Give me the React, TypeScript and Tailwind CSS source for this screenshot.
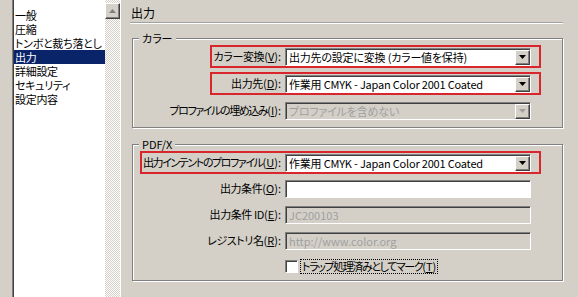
import React from "react";

const sunken =
  "border border-t-[#808080] border-l-[#808080] border-r-white border-b-white shadow-[inset_1px_1px_0_#404040]";

function Accel({ text, k, tight }: { text: string; k: string; tight?: boolean }) {
  return (
    <span className="whitespace-nowrap">
      <span className={tight ? "tracking-[-1.4px]" : "tracking-[-0.4px]"}>{text}</span>(<u>{k}</u>):
    </span>
  );
}

function Arrow({ disabled }: { disabled?: boolean }) {
  return (
    <span className="w-[15px] h-full bg-[#d4d0c8] border border-t-white border-l-white border-r-[#404040] border-b-[#404040] shadow-[inset_-1px_-1px_0_#808080] flex items-center justify-center">
      <svg width="7" height="4" viewBox="0 0 7 4">
        <path d="M0 0h7L3.5 4z" fill={disabled ? "#a0a0a0" : "#000"} />
      </svg>
    </span>
  );
}

function Select({ value, disabled }: { value: string; disabled?: boolean }) {
  return (
    <div
      className={`w-[246px] h-[18px] shrink-0 flex items-stretch pt-[1px] pl-[1px] ${sunken} ${
        disabled ? "bg-[#d4d0c8] text-[#a0a0a0]" : "bg-white text-black"
      }`}
    >
      <span className="flex-1 pl-[2px] leading-[15px] truncate tracking-[-0.2px]">{value}</span>
      <Arrow disabled={disabled} />
    </div>
  );
}

function Input({ value, disabled }: { value?: string; disabled?: boolean }) {
  return (
    <div
      className={`w-[246px] h-[18px] shrink-0 pl-[3px] leading-[16px] ${sunken} ${
        disabled ? "bg-[#d4d0c8] text-[#a0a0a0]" : "bg-white text-black"
      }`}
    >
      {value}
    </div>
  );
}

function Row({
  label,
  k,
  width,
  tight,
  children,
}: {
  label?: string;
  k?: string;
  width?: string;
  tight?: boolean;
  children: React.ReactNode;
}) {
  return (
    <div className="flex justify-end">
      <div
        className={`h-[23px] flex items-center justify-end gap-[4px] pr-[8px] border-2 ${
          width ? `${width} border-[#d8262c]` : "border-transparent"
        }`}
      >
        {label && <Accel text={label} k={k ?? ""} tight={tight} />}
        {children}
      </div>
    </div>
  );
}

function Group({
  title,
  gap,
  pb,
  children,
}: {
  title: string;
  gap: string;
  pb: string;
  children: React.ReactNode;
}) {
  return (
    <fieldset
      className={`ml-[2px] pr-[21px] ${pb} border border-[#808080] shadow-[inset_1px_1px_0_#fff,1px_1px_0_#fff] flex flex-col ${gap}`}
    >
      <legend className="ml-[6px] px-[3px] leading-[14px] bg-[#d4d0c8]">{title}</legend>
      {children}
    </fieldset>
  );
}

const items = ["一般", "圧縮", "トンボと裁ち落とし", "出力", "詳細設定", "セキュリティ", "設定内容"];

export default function App() {
  return (
    <div className="w-[578px] h-[297px] overflow-hidden bg-[#d4d0c8] flex pr-[15px] text-[11px] text-black font-['Noto_Sans_CJK_JP','Noto_Sans',sans-serif] [font-feature-settings:'palt']">
      <div className="ml-[12px] w-[109px] h-[310px] flex border-l border-l-[#808080] border-r border-r-white shadow-[inset_1px_0_0_#404040]">
        <ul className="flex-1 ml-[1px] bg-white pt-[8px] text-[11px] tracking-[-0.3px]">
          {items.map((it) => (
            <li
              key={it}
              className={`h-[14px] leading-[14px] pl-[1px] whitespace-nowrap ${
                it === "出力" ? "bg-[#0a246a] text-white" : ""
              }`}
            >
              {it}
            </li>
          ))}
        </ul>
        <div className="w-[15px] bg-[repeating-conic-gradient(#d4d0c8_0_25%,#fff_0_50%)] bg-[length:2px_2px] pt-[3px]">
          <div className="h-[16px] bg-[#d4d0c8] border border-t-white border-l-white border-r-[#404040] border-b-[#404040] shadow-[inset_-1px_-1px_0_#808080] flex items-center justify-center">
            <svg width="7" height="4" viewBox="0 0 7 4">
              <path d="M0 4h7L3.5 0z" fill="#808080" />
            </svg>
          </div>
        </div>
      </div>

      <div className="flex-1 ml-[9px] flex flex-col">
        <div className="pt-[5px] pb-[2px] pl-[1px] text-[12px] leading-[15px] border-b border-[#a0a0a0] shadow-[0_1px_0_#fff]">
          出力
        </div>

        <div className="mt-[8px]">
          <Group title="カラー" gap="gap-[4px]" pb="pb-[5px]">
            <Row label="カラー変換" k="V" width="w-[331px]">
              <Select value="出力先の設定に変換 (カラー値を保持)" />
            </Row>
            <Row label="出力先" k="D" width="w-[331px]">
              <Select value="作業用 CMYK - Japan Color 2001 Coated" />
            </Row>
            <Row label="プロファイルの埋め込み" k="I" tight>
              <Select value="プロファイルを含めない" disabled />
            </Row>
          </Group>
        </div>

        <div className="mt-[9px]">
          <Group title="PDF/X" gap="gap-[3px]" pb="pb-[2px]">
            <Row label="出力インテントのプロファイル" k="U" width="w-[401px]" tight>
              <Select value="作業用 CMYK - Japan Color 2001 Coated" />
            </Row>
            <Row label="出力条件" k="O">
              <Input />
            </Row>
            <Row label="出力条件 ID" k="E">
              <Input value="JC200103" disabled />
            </Row>
            <Row label="レジストリ名" k="R">
              <Input value="http://www.color.org" disabled />
            </Row>
            <Row>
              <div className="w-[246px] shrink-0 flex items-center gap-[2px]">
                <span className={`w-[13px] h-[13px] bg-white ${sunken}`} />
                <span className="border border-dotted border-black px-[1px] leading-[13px] whitespace-nowrap">
                  <span className="tracking-[-1.4px]">トラップ処理済みとしてマーク</span>(<u>T</u>)
                </span>
              </div>
            </Row>
          </Group>
        </div>
      </div>
    </div>
  );
}
